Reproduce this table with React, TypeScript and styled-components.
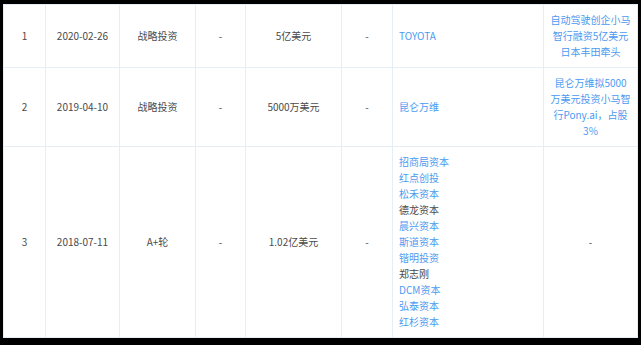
import React from 'react';
import styled, { createGlobalStyle } from 'styled-components';

const GlobalStyle = createGlobalStyle`
  html, body {
    margin: 0;
    padding: 0;
    background: #000;
  }
`;

interface IInvestor {
  name: string;
  linked: boolean;
}

interface IRound {
  index: number;
  date: string;
  round: string;
  valuation: string;
  amount: string;
  ratio: string;
  investors: IInvestor[];
  news: string;
}

const rounds: IRound[] = [
  {
    index: 1,
    date: '2020-02-26',
    round: '战略投资',
    valuation: '-',
    amount: '5亿美元',
    ratio: '-',
    investors: [{ name: 'TOYOTA', linked: true }],
    news: '自动驾驶创企小马智行融资5亿美元日本丰田牵头',
  },
  {
    index: 2,
    date: '2019-04-10',
    round: '战略投资',
    valuation: '-',
    amount: '5000万美元',
    ratio: '-',
    investors: [{ name: '昆仑万维', linked: true }],
    news: '昆仑万维拟5000万美元投资小马智行Pony.ai，占股3%',
  },
  {
    index: 3,
    date: '2018-07-11',
    round: 'A+轮',
    valuation: '-',
    amount: '1.02亿美元',
    ratio: '-',
    investors: [
      { name: '招商局资本', linked: true },
      { name: '红点创投', linked: true },
      { name: '松禾资本', linked: true },
      { name: '德龙资本', linked: false },
      { name: '晨兴资本', linked: true },
      { name: '斯道资本', linked: true },
      { name: '锴明投资', linked: true },
      { name: '郑志刚', linked: false },
      { name: 'DCM资本', linked: true },
      { name: '弘泰资本', linked: true },
      { name: '红杉资本', linked: true },
    ],
    news: '',
  },
];

const columnWidths = [42, 74, 76, 50, 96, 51, 151, 94];

function App() {
  return (
    <SPage>
      <GlobalStyle />
      <STable>
        <colgroup>
          {columnWidths.map((w, i) => (
            <col key={i} style={{ width: w }} />
          ))}
        </colgroup>
        <tbody>
          {rounds.map((r) => (
            <tr key={r.index}>
              <SCell>{r.index}</SCell>
              <SCell>{r.date}</SCell>
              <SCell>{r.round}</SCell>
              <SCell>{r.valuation}</SCell>
              <SCell>{r.amount}</SCell>
              <SCell>{r.ratio}</SCell>
              <SCell align="left">
                {r.investors.map((inv) => (
                  <SInvestor key={inv.name} linked={inv.linked}>
                    {inv.name}
                  </SInvestor>
                ))}
              </SCell>
              <SCell>
                {r.news ? <SLink>{r.news}</SLink> : '-'}
              </SCell>
            </tr>
          ))}
        </tbody>
      </STable>
    </SPage>
  );
}

const SPage = styled.div`
  width: 641px;
  height: 345px;
  box-sizing: border-box;
  padding: 4px 4px 0 3px;
  background: #000;
  overflow: hidden;
`;

const STable = styled.table`
  width: 634px;
  table-layout: fixed;
  border-collapse: collapse;
  background: #fff;
  font-family: "Microsoft YaHei", "Noto Sans CJK SC", sans-serif;
  font-size: 10px;
  line-height: 16px;
  color: #4a4a4a;
`;

const SCell = styled.td<{ align?: 'left' | 'center' }>`
  border: 1px solid #e6edf4;
  padding: 7px 6px 7px;
  text-align: ${({ align }) => align || 'center'};
  vertical-align: middle;
`;

const SInvestor = styled.div<{ linked: boolean }>`
  color: ${({ linked }) => (linked ? '#4b9af0' : '#4a4a4a')};
  white-space: nowrap;
`;

const SLink = styled.span`
  color: #4b9af0;
`;

export default App;
